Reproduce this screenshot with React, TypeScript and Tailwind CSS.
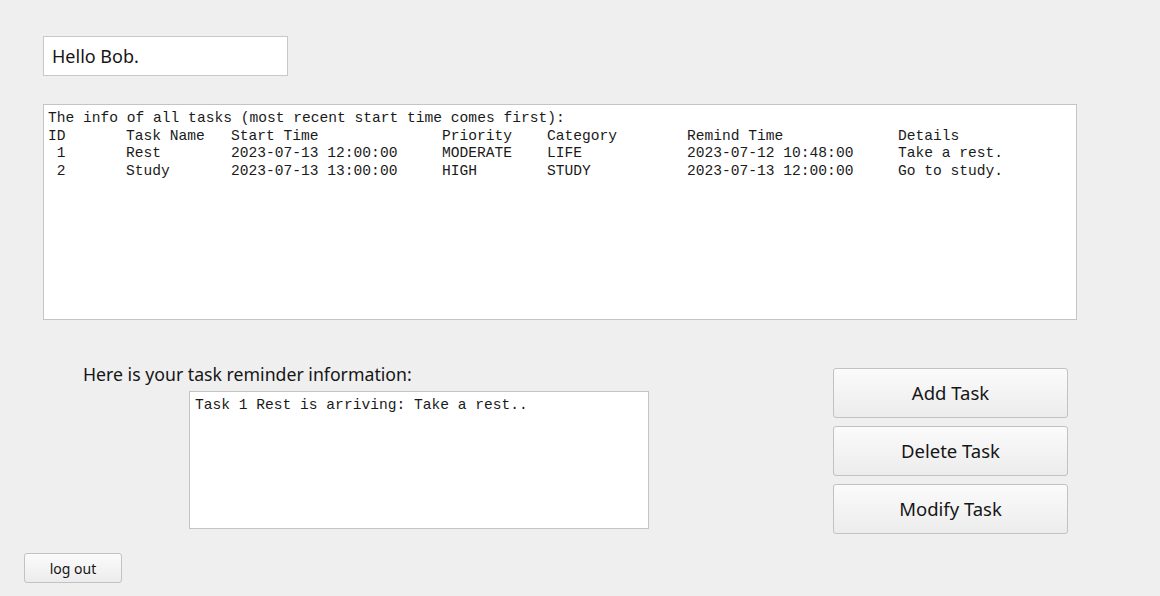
const tasks = [
  { id: ' 1', name: 'Rest', start: '2023-07-13 12:00:00', priority: 'MODERATE', category: 'LIFE', remind: '2023-07-12 10:48:00', details: 'Take a rest.' },
  { id: ' 2', name: 'Study', start: '2023-07-13 13:00:00', priority: 'HIGH', category: 'STUDY', remind: '2023-07-13 12:00:00', details: 'Go to study.' },
]

const mono = "font-['Liberation_Mono',monospace] text-[14.6px] leading-[17.5px] text-[#1a1a1a] whitespace-pre"
const ui = "font-['Noto_Sans',sans-serif] text-[#161616]"

function Row({ cells }: { cells: string[] }) {
  return (
    <div className="grid grid-cols-[78px_105px_211px_105px_140px_211px_1fr]">
      {cells.map((c, i) => (
        <span key={i}>{c}</span>
      ))}
    </div>
  )
}

function Button({ label }: { label: string }) {
  return (
    <button className={`${ui} h-[50px] w-[235px] rounded-[3px] border border-[#c2c2c2] bg-gradient-to-b from-[#fbfbfb] to-[#ececec] text-[18.5px]`}>
      {label}
    </button>
  )
}

export default function App() {
  return (
    <div className="w-[1160px] h-[596px] bg-[#efefef] pt-[36px] overflow-hidden">
      <div className={`${ui} ml-[43px] w-[245px] h-[40px] border border-[#c8c8c8] bg-white pl-[8px] flex items-center text-[18px]`}>
        Hello Bob.
      </div>

      <div className={`${mono} mt-[28px] ml-[43px] w-[1034px] h-[216px] border border-[#c4c4c4] bg-white pl-[4px] pt-[5px]`}>
        <div>The info of all tasks (most recent start time comes first):</div>
        <Row cells={['ID', 'Task Name', 'Start Time', 'Priority', 'Category', 'Remind Time', 'Details']} />
        {tasks.map((t) => (
          <Row key={t.id} cells={[t.id, t.name, t.start, t.priority, t.category, t.remind, t.details]} />
        ))}
      </div>

      <div className="mt-[43px] flex items-start">
        <div className="ml-[83px] w-[566px]">
          <div className={`${ui} text-[17.7px] leading-[22px]`}>Here is your task reminder information:</div>
          <div className={`${mono} mt-[6px] ml-[106px] w-[460px] h-[138px] border border-[#c4c4c4] bg-white pl-[5px] pt-[5px]`}>
            Task 1 Rest is arriving: Take a rest..
          </div>
        </div>
        <div className="ml-[184px] pt-[5px] flex flex-col gap-[8px]">
          <Button label="Add Task" />
          <Button label="Delete Task" />
          <Button label="Modify Task" />
        </div>
      </div>

      <button className={`${ui} mt-[19px] ml-[24px] h-[30px] w-[98px] rounded-[3px] border border-[#c2c2c2] bg-gradient-to-b from-[#fbfbfb] to-[#ececec] text-[14px]`}>
        log out
      </button>
    </div>
  )
}
